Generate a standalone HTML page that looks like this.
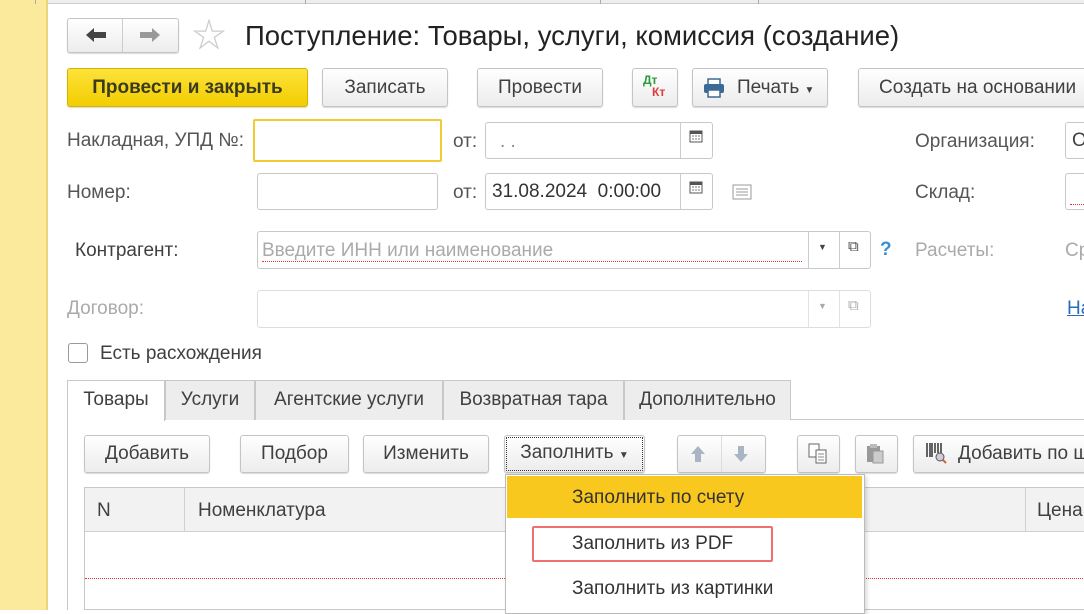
<!DOCTYPE html>
<html><head><meta charset="utf-8"><style>
*{box-sizing:border-box;margin:0;padding:0}
body{width:1084px;height:610px;overflow:hidden;background:#fff;position:relative;font-family:"Liberation Sans","Noto Sans CJK SC",sans-serif;font-size:19px;color:#404040}
.a{position:absolute;white-space:nowrap}
.btn{position:absolute;border:1px solid #c4c4c4;border-radius:3px;background:linear-gradient(#fff,#ececec);box-shadow:0 1px 1px rgba(0,0,0,.15);text-align:center;color:#404040}
.inp{position:absolute;border:1px solid #c8c8c8;border-radius:3px;background:#fff}
.lbl{position:absolute;color:#555;white-space:nowrap}
.tab{position:absolute;top:380px;height:40px;border:1px solid #c8c8c8;border-bottom:none;background:#ededed;line-height:38px;text-align:center;color:#404040}
</style></head><body>
<div class="a" style="left:0;top:0;width:48px;height:610px;background:#fbe99c;border-right:2px solid #ead57a"></div>
<div class="a" style="left:48px;top:0;width:1036px;height:4px;background:#eee;border-bottom:1px solid #ccc"></div>
<div class="a" style="left:35px;top:0;width:1px;height:4px;background:#aaa"></div>
<div class="a" style="left:305px;top:0;width:1px;height:4px;background:#aaa"></div>
<div class="a" style="left:600px;top:0;width:1px;height:4px;background:#aaa"></div>
<div class="a" style="left:758px;top:0;width:1px;height:4px;background:#aaa"></div>

<div class="btn" style="left:67px;top:18px;width:112px;height:35px"></div>
<div class="a" style="left:122px;top:19px;width:1px;height:33px;background:#ccc"></div>
<svg class="a" style="left:85px;top:27px" width="22" height="16"><path d="M1 8l8-7v4h12v6H9v4z" fill="#444"/></svg>
<svg class="a" style="left:139px;top:27px" width="22" height="16"><path d="M21 8l-8-7v4H1v6h12v4z" fill="#999"/></svg>
<div class="a" style="left:192px;top:17px;font-size:34px;color:#ccc;line-height:38px">&#9734;</div>
<div class="a" style="left:245px;top:20px;font-size:27.5px;color:#222">Поступление: Товары, услуги, комиссия (создание)</div>

<div class="btn" style="left:67px;top:68px;width:241px;height:39px;background:linear-gradient(#fde33a,#f2cd00);border-color:#d6b300;font-weight:bold;line-height:37px;color:#3b3b1e">Провести и закрыть</div>
<div class="btn" style="left:322px;top:68px;width:126px;height:39px;line-height:37px">Записать</div>
<div class="btn" style="left:477px;top:68px;width:126px;height:39px;line-height:37px">Провести</div>
<div class="btn" style="left:632px;top:68px;width:46px;height:39px"><span class="a" style="left:10px;top:4px;font-size:12px;color:#2a9a3a;font-weight:bold">Дт</span><span class="a" style="left:19px;top:16px;font-size:12px;color:#e03a3a;font-weight:bold">Кт</span></div>
<div class="btn" style="left:692px;top:68px;width:136px;height:39px;line-height:37px;text-align:left;padding-left:44px">Печать <span style="font-size:10px">&#9660;</span></div>
<svg class="a" style="left:703px;top:78px" width="22" height="20"><rect x="5" y="1" width="12" height="6" fill="#fff" stroke="#3c6a96" stroke-width="1.5"/><rect x="1" y="6" width="20" height="9" rx="2" fill="#3c6a96"/><rect x="5" y="12" width="12" height="7" fill="#fff" stroke="#3c6a96" stroke-width="1.5"/></svg>
<div class="btn" style="left:858px;top:68px;width:240px;height:39px;line-height:37px;text-align:left;padding-left:20px">Создать на основании</div>

<div class="lbl" style="left:67px;top:130px">Накладная, УПД №:</div>
<div class="inp" style="left:253px;top:119px;width:189px;height:43px;border:2px solid #f3c934;border-radius:2px"></div>
<div class="lbl" style="left:453px;top:131px">от:</div>
<div class="inp" style="left:485px;top:122px;width:228px;height:37px"></div>
<div class="a" style="left:680px;top:123px;width:1px;height:35px;background:#ccc"></div>
<div class="a" style="left:500px;top:131px;color:#888">. .</div>
<div class="lbl" style="left:915px;top:131px">Организация:</div>
<div class="inp" style="left:1065px;top:122px;width:40px;height:37px;padding:7px 6px">О</div>

<div class="lbl" style="left:67px;top:182px">Номер:</div>
<div class="inp" style="left:257px;top:173px;width:181px;height:37px"></div>
<div class="lbl" style="left:453px;top:182px">от:</div>
<div class="inp" style="left:485px;top:173px;width:228px;height:37px;padding:7px 6px;color:#333">31.08.2024&nbsp; 0:00:00</div>
<div class="a" style="left:680px;top:174px;width:1px;height:35px;background:#ccc"></div>
<div class="lbl" style="left:915px;top:182px">Склад:</div>
<div class="inp" style="left:1065px;top:173px;width:40px;height:37px"></div>
<div class="a" style="left:1070px;top:204px;width:14px;border-top:1px dotted #e33"></div>
<svg class="a" style="left:689px;top:129px" width="14" height="14"><rect x="1" y="2" width="12" height="11" fill="#fff" stroke="#555"/><rect x="1" y="2" width="12" height="3" fill="#555"/><path d="M3 7h2M6 7h2M9 7h2M3 10h2M6 10h2M9 10h2" stroke="#777"/></svg>
<svg class="a" style="left:689px;top:180px" width="14" height="14"><rect x="1" y="2" width="12" height="11" fill="#fff" stroke="#555"/><rect x="1" y="2" width="12" height="3" fill="#555"/><path d="M3 7h2M6 7h2M9 7h2M3 10h2M6 10h2M9 10h2" stroke="#777"/></svg>
<svg class="a" style="left:732px;top:184px" width="20" height="16"><rect x="1" y="1" width="18" height="14" fill="#fff" stroke="#999"/><path d="M4 5h12M4 8h12M4 11h12" stroke="#999"/></svg>

<div class="lbl" style="left:75px;top:240px;color:#404040">Контрагент:</div>
<div class="inp" style="left:257px;top:231px;width:614px;height:38px;color:#aaa;padding:8px 4px">Введите ИНН или наименование</div>
<div class="a" style="left:262px;top:261px;width:540px;border-top:1px dotted #e33"></div>
<div class="a" style="left:808px;top:232px;width:1px;height:36px;background:#ccc"></div>
<div class="a" style="left:839px;top:232px;width:1px;height:36px;background:#ccc"></div>
<div class="a" style="left:818px;top:242px;font-size:9px;color:#444">&#9660;</div>
<div class="a" style="left:848px;top:238px;font-size:15px;color:#444">&#10697;</div>
<div class="a" style="left:880px;top:239px;color:#3b8fd1;font-weight:bold">?</div>
<div class="lbl" style="left:915px;top:240px;color:#aaa">Расчеты:</div>
<div class="lbl" style="left:1065px;top:240px;color:#aaa">Ср</div>

<div class="lbl" style="left:67px;top:298px;color:#aaa">Договор:</div>
<div class="inp" style="left:257px;top:290px;width:614px;height:38px;border-color:#ddd"></div>
<div class="a" style="left:808px;top:291px;width:1px;height:36px;background:#e2e2e2"></div>
<div class="a" style="left:839px;top:291px;width:1px;height:36px;background:#e2e2e2"></div>
<div class="a" style="left:818px;top:301px;font-size:9px;color:#aaa">&#9660;</div>
<div class="a" style="left:848px;top:297px;font-size:15px;color:#aaa">&#10697;</div>
<div class="a" style="left:1067px;top:298px;color:#2a6bb8;text-decoration:underline">На</div>

<div class="a" style="left:68px;top:343px;width:20px;height:20px;border:1px solid #999;border-radius:3px;background:#fff"></div>
<div class="a" style="left:100px;top:343px;color:#404040">Есть расхождения</div>

<div class="a" style="left:67px;top:419px;width:1030px;height:1px;background:#c8c8c8"></div>
<div class="a" style="left:67px;top:419px;width:1px;height:191px;background:#c8c8c8"></div>
<div class="tab" style="left:67px;width:98px;background:#fff;height:41px">Товары</div>
<div class="tab" style="left:165px;width:90px">Услуги</div>
<div class="tab" style="left:255px;width:188px">Агентские услуги</div>
<div class="tab" style="left:443px;width:181px">Возвратная тара</div>
<div class="tab" style="left:624px;width:167px">Дополнительно</div>

<div class="btn" style="left:84px;top:435px;width:126px;height:38px;line-height:36px">Добавить</div>
<div class="btn" style="left:240px;top:435px;width:109px;height:38px;line-height:36px">Подбор</div>
<div class="btn" style="left:363px;top:435px;width:126px;height:38px;line-height:36px">Изменить</div>
<div class="btn" style="left:504px;top:435px;width:141px;height:38px;line-height:34px;outline:1px dotted #333;outline-offset:-3px">Заполнить <span style="font-size:10px">&#9660;</span></div>
<div class="btn" style="left:677px;top:435px;width:89px;height:38px;color:#9ab"></div>
<div class="a" style="left:721px;top:436px;width:1px;height:36px;background:#ddd"></div>
<svg class="a" style="left:689px;top:444px" width="70" height="20"><path d="M9 2l7 8h-4v8h-6v-8h-4z" fill="#a9b5c2"/><path d="M52 18l7-8h-4v-8h-6v8h-4z" fill="#a9b5c2"/></svg>
<div class="btn" style="left:797px;top:435px;width:43px;height:38px"></div>
<svg class="a" style="left:807px;top:443px" width="22" height="22"><rect x="2" y="1" width="10" height="13" fill="#fff" stroke="#666"/><rect x="9" y="7" width="10" height="13" fill="#fff" stroke="#666"/><path d="M11 11h6M11 14h6M11 17h6" stroke="#888"/></svg>
<div class="btn" style="left:855px;top:435px;width:43px;height:38px"></div>
<svg class="a" style="left:865px;top:443px" width="22" height="22"><rect x="2" y="3" width="13" height="16" fill="#999"/><rect x="8" y="8" width="10" height="12" fill="#ccc" stroke="#999"/><rect x="5" y="1" width="7" height="4" fill="#bbb"/></svg>
<div class="btn" style="left:913px;top:435px;width:200px;height:38px;line-height:36px;text-align:left;padding-left:44px">Добавить по ш</div>
<svg class="a" style="left:925px;top:441px" width="22" height="24"><path d="M2 2v14M5 2v14M7 2v14M10 2v10M13 2v10M16 2v10" stroke="#333" stroke-width="1.5"/><circle cx="15" cy="16" r="4" fill="#ccd" stroke="#555"/><path d="M18 19l3 3" stroke="#c63" stroke-width="2"/></svg>

<div class="a" style="left:84px;top:487px;width:1010px;height:123px;border:1px solid #c8c8c8;background:#fff"></div>
<div class="a" style="left:85px;top:488px;width:1000px;height:44px;background:#f2f2f2;border-bottom:1px solid #d0d0d0"></div>
<div class="a" style="left:184px;top:488px;width:1px;height:44px;background:#d0d0d0"></div>
<div class="a" style="left:1025px;top:488px;width:1px;height:44px;background:#d0d0d0"></div>
<div class="a" style="left:97px;top:500px">N</div>
<div class="a" style="left:198px;top:500px">Номенклатура</div>
<div class="a" style="left:1037px;top:500px">Цена</div>
<div class="a" style="left:85px;top:578px;width:1000px;border-top:1px dotted #e33"></div>

<div class="a" style="left:505px;top:474px;width:360px;height:140px;background:#fff;border:1px solid #bbb;box-shadow:2px 2px 4px rgba(0,0,0,.15)"></div>
<div class="a" style="left:507px;top:476px;width:355px;height:42px;background:#f9c81e"></div>
<div class="a" style="left:572px;top:487px;color:#333">Заполнить по счету</div>
<div class="a" style="left:532px;top:526px;width:241px;height:36px;border:2px solid #ee7070;border-radius:2px"></div>
<div class="a" style="left:572px;top:533px;color:#333">Заполнить из PDF</div>
<div class="a" style="left:572px;top:578px;color:#333">Заполнить из картинки</div>
</body></html>
